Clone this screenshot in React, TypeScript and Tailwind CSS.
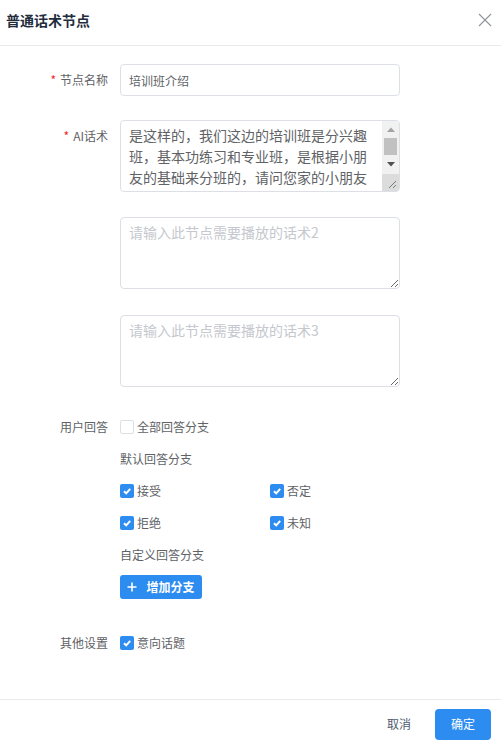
import React from "react";

const font = { fontFamily: '"Noto Sans CJK SC", "Noto Sans", sans-serif' };

function Check({ checked, label }: { checked: boolean; label: string }) {
  return (
    <label className="flex items-center text-[12px] text-[#606266]">
      {checked ? (
        <span className="flex h-[14px] w-[14px] items-center justify-center rounded-[2px] bg-[#2d8cf0]">
          <svg width="10" height="10" viewBox="0 0 10 10">
            <path d="M2 5.2 L4.2 7.3 L8.2 2.8" fill="none" stroke="#fff" strokeWidth="2" />
          </svg>
        </span>
      ) : (
        <span className="h-[14px] w-[14px] rounded-[2px] border border-[#dcdfe6] bg-white" />
      )}
      <span className="ml-[3px]">{label}</span>
    </label>
  );
}

function Label({ text, required }: { text: string; required?: boolean }) {
  return (
    <div className="w-[120px] shrink-0 pr-3 text-right text-[12px] leading-[32px] text-[#606266]">
      {required && <span className="mr-[4px] text-[#f5222d]">*</span>}
      {text}
    </div>
  );
}

export default function App() {
  return (
    <div style={font} className="flex h-[748px] w-[501px] flex-col bg-white">
      <div className="flex h-[46px] shrink-0 items-start justify-between border-b border-[#e8eaec] pl-[6px] pr-[9px] pt-[10px]">
        <span className="text-[14px] font-bold leading-[20px] text-[#1f2d3d]">普通话术节点</span>
        <svg width="14" height="14" viewBox="0 0 14 14" className="mt-[3px]">
          <path d="M1 1 L13 13 M13 1 L1 13" stroke="#909399" strokeWidth="1.1" />
        </svg>
      </div>

      <div className="flex-1 pt-[18px]">
        <div className="flex">
          <Label text="节点名称" required />
          <input
            defaultValue="培训班介绍"
            className="h-[32px] w-[280px] rounded-[4px] border border-[#dcdfe6] px-[8px] text-[12px] text-[#606266] outline-none"
          />
        </div>

        <div className="mt-[24px] flex">
          <Label text="AI话术" required />
          <div className="flex h-[72px] w-[280px] overflow-hidden rounded-[4px] border border-[#dcdfe6]">
            <textarea
              defaultValue="是这样的，我们这边的培训班是分兴趣班，基本功练习和专业班，是根据小朋友的基础来分班的，请问您家的小朋友之前有学过相关的课程吗？我们可以先安排一节免费的体验课。"
              className="h-full min-w-0 flex-1 resize-none overflow-hidden px-[8px] py-[4px] text-[14px] leading-[21px] text-[#606266] outline-none"
            />
            <div className="flex w-[17px] shrink-0 flex-col bg-[#f1f1f1]">
              <div className="flex h-[17px] items-center justify-center">
                <svg width="8" height="5" viewBox="0 0 8 5">
                  <path d="M0 5 L4 0.5 L8 5 Z" fill="#a3a3a3" />
                </svg>
              </div>
              <div className="mx-[2px] h-[17px] bg-[#c1c1c1]" />
              <div className="flex h-[19px] items-center justify-center">
                <svg width="8" height="5" viewBox="0 0 8 5">
                  <path d="M0 0 L8 0 L4 4.5 Z" fill="#505050" />
                </svg>
              </div>
              <div className="relative flex-1 bg-[#dcdcdc]">
                <svg width="10" height="10" viewBox="0 0 10 10" className="absolute bottom-[2px] right-[2px]">
                  <path d="M2 9 L9 2 M6 9 L9 6" stroke="#7a7a7a" strokeWidth="1" />
                </svg>
              </div>
            </div>
          </div>
        </div>

        <div className="mt-[25px] flex">
          <div className="w-[120px] shrink-0" />
          <textarea
            placeholder="请输入此节点需要播放的话术2"
            className="h-[72px] w-[280px] rounded-[4px] border border-[#dcdfe6] px-[8px] py-[4px] text-[14px] leading-[21px] text-[#606266] outline-none placeholder:text-[#c5c8ce]"
          />
        </div>

        <div className="mt-[26px] flex">
          <div className="w-[120px] shrink-0" />
          <textarea
            placeholder="请输入此节点需要播放的话术3"
            className="h-[72px] w-[280px] rounded-[4px] border border-[#dcdfe6] px-[8px] py-[4px] text-[14px] leading-[21px] text-[#606266] outline-none placeholder:text-[#c5c8ce]"
          />
        </div>

        <div className="mt-[24px] flex">
          <Label text="用户回答" />
          <div className="flex flex-col">
            <div className="flex h-[32px] items-center">
              <Check checked={false} label="全部回答分支" />
            </div>
            <div className="flex h-[32px] items-center text-[12px] text-[#606266]">默认回答分支</div>
            <div className="grid h-[32px] grid-cols-[150px_150px] items-center">
              <Check checked label="接受" />
              <Check checked label="否定" />
            </div>
            <div className="grid h-[32px] grid-cols-[150px_150px] items-center">
              <Check checked label="拒绝" />
              <Check checked label="未知" />
            </div>
            <div className="flex h-[32px] items-center text-[12px] text-[#606266]">自定义回答分支</div>
            <div className="flex h-[32px] items-center">
              <button className="flex h-[24px] w-[82px] items-center justify-center gap-[9px] rounded-[3px] bg-[#2d8cf0] text-[12px] font-bold text-white">
                <svg width="10" height="10" viewBox="0 0 10 10">
                  <path d="M5 0.5 V9.5 M0.5 5 H9.5" stroke="#fff" strokeWidth="1.6" />
                </svg>
                增加分支
              </button>
            </div>
          </div>
        </div>

        <div className="mt-[24px] flex">
          <Label text="其他设置" />
          <div className="flex h-[32px] items-center">
            <Check checked label="意向话题" />
          </div>
        </div>
      </div>

      <div className="flex h-[49px] shrink-0 items-center justify-end gap-[8px] border-t border-[#e8eaec] pr-[10px]">
        <button className="h-[31px] w-[56px] text-[12px] text-[#515a6e]">取消</button>
        <button className="h-[31px] w-[56px] rounded-[4px] bg-[#2d8cf0] text-[12px] text-white">确定</button>
      </div>
    </div>
  );
}
